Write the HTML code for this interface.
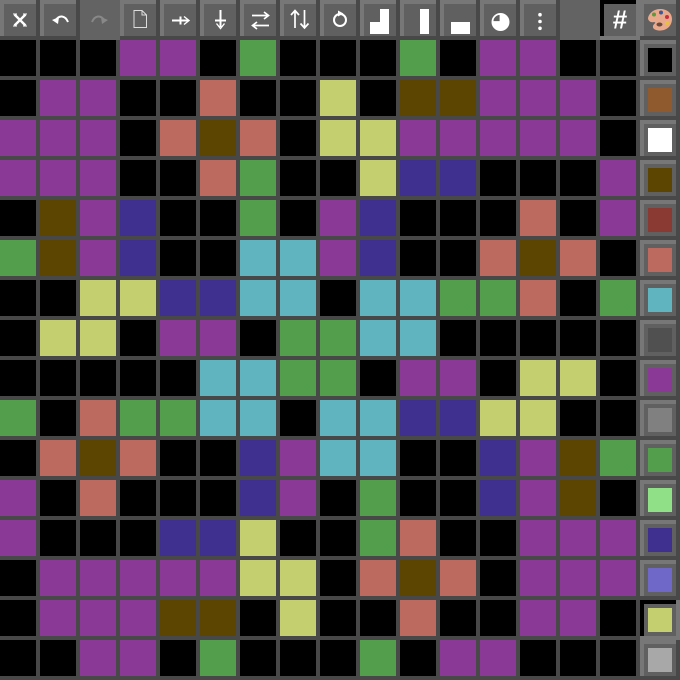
<!DOCTYPE html>
<html><head><meta charset="utf-8"><style>
html,body{margin:0;padding:0;background:#484848;width:680px;height:680px;overflow:hidden}
svg{display:block}
.c rect{width:36px;height:36px}
.P{fill:#8a3a96}.G{fill:#529e4c}.L{fill:#c4d070}.R{fill:#bc6a60}.B{fill:#5c4500}.N{fill:#3f3090}.C{fill:#60b4c0}
.w{fill:none;stroke:#fff;stroke-width:2}
.f{fill:#fff}
</style></head><body>
<svg width="680" height="680" viewBox="0 0 680 680" xmlns="http://www.w3.org/2000/svg">
<defs>
<pattern id="k" width="40" height="40" patternUnits="userSpaceOnUse"><rect width="36" height="36" fill="#000"/></pattern>
<g id="b"><rect width="36" height="36" fill="#777"/><rect x="4" y="4" width="32" height="32" fill="#606060"/></g>
</defs>
<rect width="680" height="680" fill="#484848"/>
<rect x="0" y="40" width="640" height="640" fill="url(#k)"/>
<!-- toolbar -->
<use href="#b" x="0"/><use href="#b" x="40"/><rect x="80" width="40" height="40" fill="#636363"/><use href="#b" x="120"/><use href="#b" x="160"/><use href="#b" x="200"/><use href="#b" x="240"/><use href="#b" x="280"/><use href="#b" x="320"/><use href="#b" x="360"/><use href="#b" x="400"/><use href="#b" x="440"/><use href="#b" x="480"/><use href="#b" x="520"/><rect x="560" width="40" height="40" fill="#636363"/><use href="#b" x="640"/>
<rect x="600" y="0" width="40" height="40" fill="#777"/><rect x="600" y="0" width="36" height="36" fill="#000"/><rect x="604" y="4" width="32" height="32" fill="#606060"/>
<!-- icons -->
<path d="M14.500 14.500L25.500 25.500M25.500 14.500L14.500 25.500" class="w" style="stroke-width:2.400"/><path d="M13 14h4M23 14h4M13 26h4M23 26h4" class="w" style="stroke-width:1"/>
<path d="M56 20C59 15 65 15 68 22" class="w"/><path d="M52 20L59 17L58 24Z" class="f"/>
<path d="M104 20C101 15 95 15 92 22" fill="none" stroke="#888" stroke-width="2"/><path d="M108 20L101 17L102 24Z" fill="#888"/>
<path d="M134 10.500H142L146.500 15V27.500H134ZM142 10.500V15H146.500" fill="none" stroke="#ddd" stroke-width="1"/>
<path d="M172 20.500H188M180.500 16.500V24.500" class="w" style="stroke-width:2"/><path d="M184 16.500L189 20.500L184 24.500" class="w" style="stroke-width:1.400"/>
<path d="M220.500 10V27M215 20.500H226" class="w" style="stroke-width:2"/><path d="M216.500 23.500L220.500 28.500L224.500 23.500" class="w" style="stroke-width:1.400"/>
<path d="M252 15.500H268M264 12L268.500 15.500L264 19M269 25.500H253M257 22L252.500 25.500L257 29" class="w" style="stroke-width:1.700"/>
<path d="M295 11V28M291 15L295 10.500L299 15M304.500 10V27.500M300.500 23.500L304.500 28L308.500 23.500" class="w" style="stroke-width:1.700"/>
<circle cx="340" cy="20" r="6" class="w"/><path d="M338 10.500L343.500 13.500L338 16.500Z" class="f"/>
<path d="M380 9H389V34H370V22H380Z" class="f"/>
<rect x="420" y="9" width="9" height="25" class="f"/>
<rect x="451" y="22" width="19" height="12" class="f"/>
<circle cx="500.500" cy="22" r="9" class="f"/><path d="M500 21.500V14.500A7 7 0 0 0 493 21.500Z" fill="#606060" stroke="#fff" stroke-width="0.800"/>
<circle cx="540" cy="14.700" r="1.800" class="f"/><circle cx="540" cy="21.500" r="1.800" class="f"/><circle cx="540" cy="28.300" r="1.800" class="f"/>
<text x="620" y="28.500" text-anchor="middle" font-family="'Liberation Sans',sans-serif" font-size="26" font-weight="bold" fill="#fff">#</text>
<path d="M660 9C667 9 672 13 672 19C672 23 670 28 664 30C659 31.500 652 30 653 26C654 23 657 23 654 22C651 23 648 21 648 18C649 13 654 9 660 9Z" fill="#e8a98c"/>
<circle cx="654" cy="14.500" r="2" fill="#5c9a3c"/><circle cx="661" cy="12.500" r="2" fill="#3a5a9c"/><circle cx="667" cy="17" r="2" fill="#c83040"/><circle cx="667" cy="23" r="2" fill="#e8c040"/><ellipse cx="659.500" cy="24.500" rx="3" ry="2" fill="#6a4a3c"/>
<!-- grid -->
<g class="c">
<rect x="120" y="40" class="P"/><rect x="160" y="40" class="P"/><rect x="240" y="40" class="G"/><rect x="400" y="40" class="G"/><rect x="480" y="40" class="P"/><rect x="520" y="40" class="P"/>
<rect x="40" y="80" class="P"/><rect x="80" y="80" class="P"/><rect x="200" y="80" class="R"/><rect x="320" y="80" class="L"/><rect x="400" y="80" class="B"/><rect x="440" y="80" class="B"/><rect x="480" y="80" class="P"/><rect x="520" y="80" class="P"/><rect x="560" y="80" class="P"/>
<rect x="0" y="120" class="P"/><rect x="40" y="120" class="P"/><rect x="80" y="120" class="P"/><rect x="160" y="120" class="R"/><rect x="200" y="120" class="B"/><rect x="240" y="120" class="R"/><rect x="320" y="120" class="L"/><rect x="360" y="120" class="L"/><rect x="400" y="120" class="P"/><rect x="440" y="120" class="P"/><rect x="480" y="120" class="P"/><rect x="520" y="120" class="P"/><rect x="560" y="120" class="P"/>
<rect x="0" y="160" class="P"/><rect x="40" y="160" class="P"/><rect x="80" y="160" class="P"/><rect x="200" y="160" class="R"/><rect x="240" y="160" class="G"/><rect x="360" y="160" class="L"/><rect x="400" y="160" class="N"/><rect x="440" y="160" class="N"/><rect x="600" y="160" class="P"/>
<rect x="40" y="200" class="B"/><rect x="80" y="200" class="P"/><rect x="120" y="200" class="N"/><rect x="240" y="200" class="G"/><rect x="320" y="200" class="P"/><rect x="360" y="200" class="N"/><rect x="520" y="200" class="R"/><rect x="600" y="200" class="P"/>
<rect x="0" y="240" class="G"/><rect x="40" y="240" class="B"/><rect x="80" y="240" class="P"/><rect x="120" y="240" class="N"/><rect x="240" y="240" class="C"/><rect x="280" y="240" class="C"/><rect x="320" y="240" class="P"/><rect x="360" y="240" class="N"/><rect x="480" y="240" class="R"/><rect x="520" y="240" class="B"/><rect x="560" y="240" class="R"/>
<rect x="80" y="280" class="L"/><rect x="120" y="280" class="L"/><rect x="160" y="280" class="N"/><rect x="200" y="280" class="N"/><rect x="240" y="280" class="C"/><rect x="280" y="280" class="C"/><rect x="360" y="280" class="C"/><rect x="400" y="280" class="C"/><rect x="440" y="280" class="G"/><rect x="480" y="280" class="G"/><rect x="520" y="280" class="R"/><rect x="600" y="280" class="G"/>
<rect x="40" y="320" class="L"/><rect x="80" y="320" class="L"/><rect x="160" y="320" class="P"/><rect x="200" y="320" class="P"/><rect x="280" y="320" class="G"/><rect x="320" y="320" class="G"/><rect x="360" y="320" class="C"/><rect x="400" y="320" class="C"/>
<rect x="200" y="360" class="C"/><rect x="240" y="360" class="C"/><rect x="280" y="360" class="G"/><rect x="320" y="360" class="G"/><rect x="400" y="360" class="P"/><rect x="440" y="360" class="P"/><rect x="520" y="360" class="L"/><rect x="560" y="360" class="L"/>
<rect x="0" y="400" class="G"/><rect x="80" y="400" class="R"/><rect x="120" y="400" class="G"/><rect x="160" y="400" class="G"/><rect x="200" y="400" class="C"/><rect x="240" y="400" class="C"/><rect x="320" y="400" class="C"/><rect x="360" y="400" class="C"/><rect x="400" y="400" class="N"/><rect x="440" y="400" class="N"/><rect x="480" y="400" class="L"/><rect x="520" y="400" class="L"/>
<rect x="40" y="440" class="R"/><rect x="80" y="440" class="B"/><rect x="120" y="440" class="R"/><rect x="240" y="440" class="N"/><rect x="280" y="440" class="P"/><rect x="320" y="440" class="C"/><rect x="360" y="440" class="C"/><rect x="480" y="440" class="N"/><rect x="520" y="440" class="P"/><rect x="560" y="440" class="B"/><rect x="600" y="440" class="G"/>
<rect x="0" y="480" class="P"/><rect x="80" y="480" class="R"/><rect x="240" y="480" class="N"/><rect x="280" y="480" class="P"/><rect x="360" y="480" class="G"/><rect x="480" y="480" class="N"/><rect x="520" y="480" class="P"/><rect x="560" y="480" class="B"/>
<rect x="0" y="520" class="P"/><rect x="160" y="520" class="N"/><rect x="200" y="520" class="N"/><rect x="240" y="520" class="L"/><rect x="360" y="520" class="G"/><rect x="400" y="520" class="R"/><rect x="520" y="520" class="P"/><rect x="560" y="520" class="P"/><rect x="600" y="520" class="P"/>
<rect x="40" y="560" class="P"/><rect x="80" y="560" class="P"/><rect x="120" y="560" class="P"/><rect x="160" y="560" class="P"/><rect x="200" y="560" class="P"/><rect x="240" y="560" class="L"/><rect x="280" y="560" class="L"/><rect x="360" y="560" class="R"/><rect x="400" y="560" class="B"/><rect x="440" y="560" class="R"/><rect x="520" y="560" class="P"/><rect x="560" y="560" class="P"/><rect x="600" y="560" class="P"/>
<rect x="40" y="600" class="P"/><rect x="80" y="600" class="P"/><rect x="120" y="600" class="P"/><rect x="160" y="600" class="B"/><rect x="200" y="600" class="B"/><rect x="280" y="600" class="L"/><rect x="400" y="600" class="R"/><rect x="520" y="600" class="P"/><rect x="560" y="600" class="P"/>
<rect x="80" y="640" class="P"/><rect x="120" y="640" class="P"/><rect x="200" y="640" class="G"/><rect x="360" y="640" class="G"/><rect x="440" y="640" class="P"/><rect x="480" y="640" class="P"/>
</g>
<!-- palette -->
<use href="#b" x="640" y="40"/><rect x="648" y="48" width="24" height="24" fill="#000"/>
<use href="#b" x="640" y="80"/><rect x="648" y="88" width="24" height="24" fill="#8f5a2e"/>
<use href="#b" x="640" y="120"/><rect x="648" y="128" width="24" height="24" fill="#fff"/>
<use href="#b" x="640" y="160"/><rect x="648" y="168" width="24" height="24" fill="#5c4500"/>
<use href="#b" x="640" y="200"/><rect x="648" y="208" width="24" height="24" fill="#8a3a33"/>
<use href="#b" x="640" y="240"/><rect x="648" y="248" width="24" height="24" fill="#bc6a60"/>
<use href="#b" x="640" y="280"/><rect x="648" y="288" width="24" height="24" fill="#60b4c0"/>
<use href="#b" x="640" y="320"/><rect x="648" y="328" width="24" height="24" fill="#505050"/>
<use href="#b" x="640" y="360"/><rect x="648" y="368" width="24" height="24" fill="#8a3a96"/>
<use href="#b" x="640" y="400"/><rect x="648" y="408" width="24" height="24" fill="#808080"/>
<use href="#b" x="640" y="440"/><rect x="648" y="448" width="24" height="24" fill="#529e4c"/>
<use href="#b" x="640" y="480"/><rect x="648" y="488" width="24" height="24" fill="#90e088"/>
<use href="#b" x="640" y="520"/><rect x="648" y="528" width="24" height="24" fill="#3f3090"/>
<use href="#b" x="640" y="560"/><rect x="648" y="568" width="24" height="24" fill="#7068c8"/>
<rect x="640" y="600" width="40" height="40" fill="#777"/><rect x="640" y="600" width="36" height="36" fill="#000"/><rect x="644" y="604" width="32" height="32" fill="#606060"/><rect x="648" y="608" width="24" height="24" fill="#c4d070"/>
<use href="#b" x="640" y="640"/><rect x="648" y="648" width="24" height="24" fill="#a8a8a8"/>
</svg>
</body></html>
